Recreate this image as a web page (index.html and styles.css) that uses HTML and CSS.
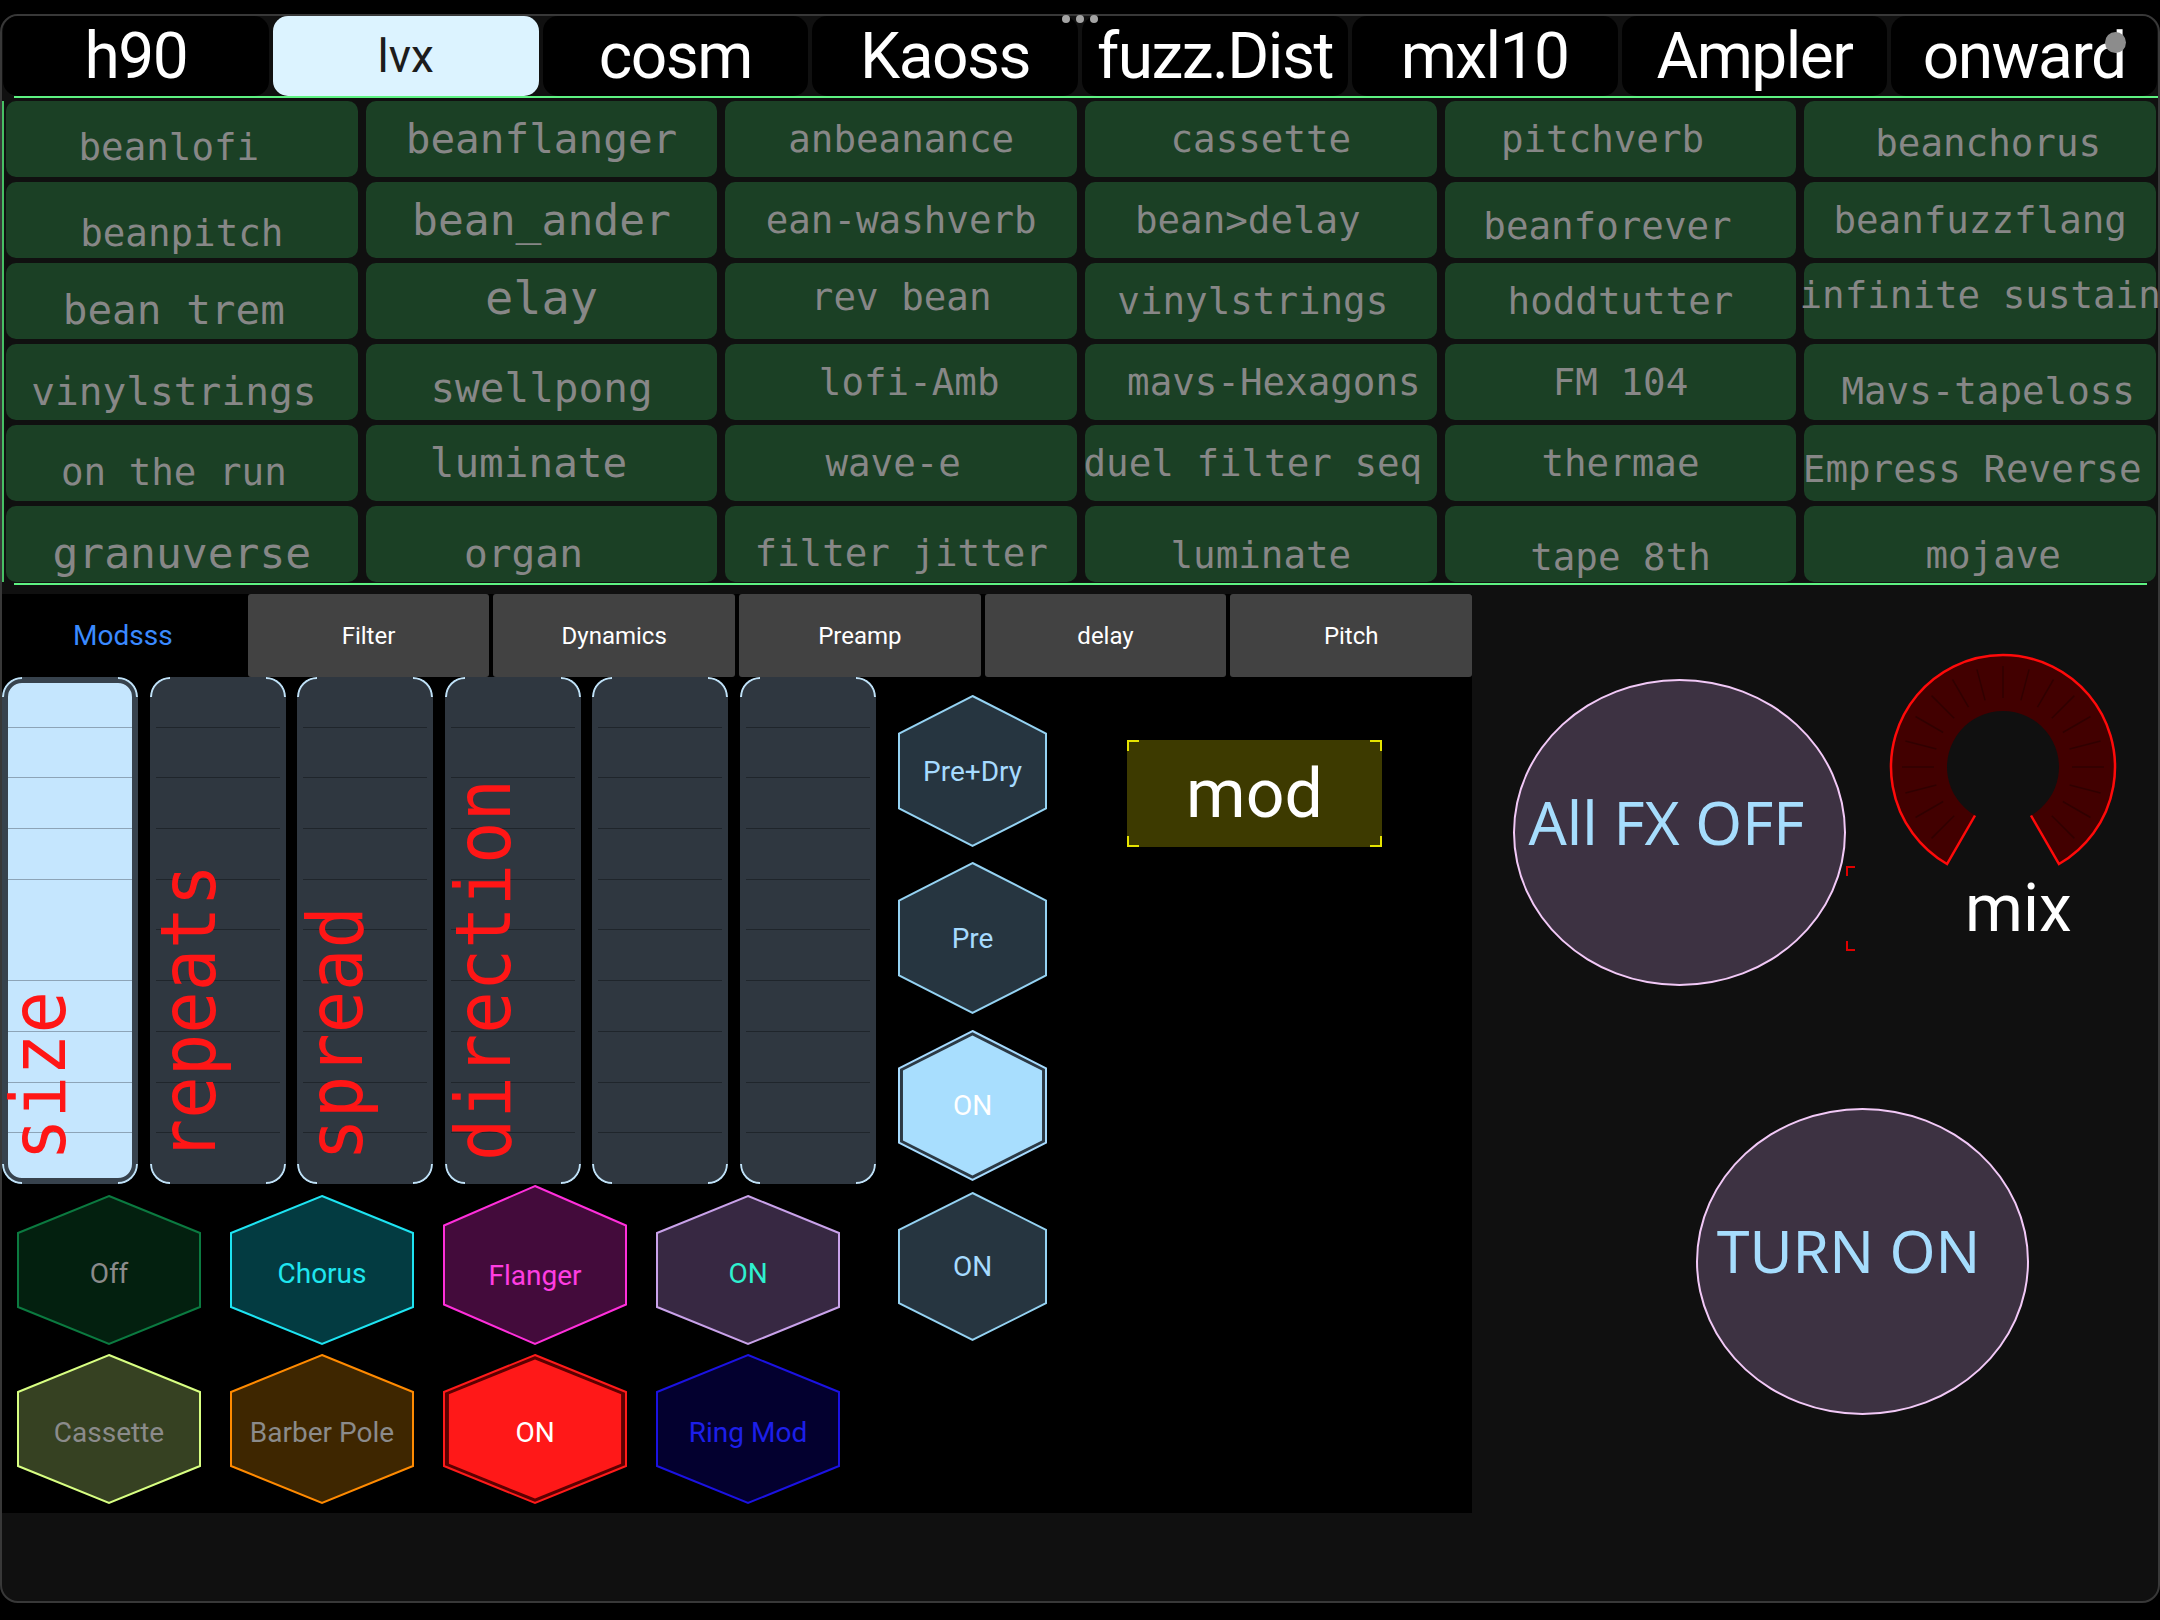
FILE: index.html
```html
<!DOCTYPE html>
<html lang="en">
<head>
<meta charset="utf-8">
<title>FX Control</title>
<link rel="stylesheet" href="styles.css">
</head>
<body>
<div class="dots"><i></i><i></i><i></i></div>
<div class="rec"></div>
<div class="frame">
  <nav class="tabs">
    <div class="tab">h90</div>
    <div class="tab active">lvx</div>
    <div class="tab">cosm</div>
    <div class="tab">Kaoss</div>
    <div class="tab">fuzz.Dist</div>
    <div class="tab">mxl10</div>
    <div class="tab">Ampler</div>
    <div class="tab">onward</div>
  </nav>
  <div class="gline"></div>
  <div class="presets">
    <div class="cell d8 l13"><span>beanlofi</span></div>
    <div class="cell fl"><span>beanflanger</span></div>
    <div class="cell"><span>anbeanance</span></div>
    <div class="cell"><span>cassette</span></div>
    <div class="cell l18"><span>pitchverb</span></div>
    <div class="cell d4 r8"><span>beanchorus</span></div>

    <div class="cell d13"><span>beanpitch</span></div>
    <div class="cell fxl"><span>bean_ander</span></div>
    <div class="cell"><span>ean-washverb</span></div>
    <div class="cell l13"><span>bean&gt;delay</span></div>
    <div class="cell d6 l13"><span>beanforever</span></div>
    <div class="cell"><span>beanfuzzflang</span></div>

    <div class="cell fl d9 l8"><span>bean trem</span></div>
    <div class="cell fxxl u4"><span>elay</span></div>
    <div class="cell u4"><span>rev bean</span></div>
    <div class="cell l8"><span>vinylstrings</span></div>
    <div class="cell"><span>hoddtutter</span></div>
    <div class="cell u6"><span>infinite sustain</span></div>

    <div class="cell fm d9 l8"><span>vinylstrings</span></div>
    <div class="cell fl d6"><span>swellpong</span></div>
    <div class="cell r8"><span>lofi-Amb</span></div>
    <div class="cell r13"><span>mavs-Hexagons</span></div>
    <div class="cell"><span>FM 104</span></div>
    <div class="cell d9 r8"><span>Mavs-tapeloss</span></div>

    <div class="cell d9 l8"><span>on the run</span></div>
    <div class="cell fl l13"><span>luminate</span></div>
    <div class="cell l8"><span>wave-e</span></div>
    <div class="cell l8"><span>duel filter seq</span></div>
    <div class="cell"><span>thermae</span></div>
    <div class="cell d6 l8"><span>Empress Reverse</span></div>

    <div class="cell fxl d9"><span>granuverse</span></div>
    <div class="cell fm d9 l18"><span>organ</span></div>
    <div class="cell d9"><span>filter jitter</span></div>
    <div class="cell d11"><span>luminate</span></div>
    <div class="cell d13"><span>tape 8th</span></div>
    <div class="cell d11 r13"><span>mojave</span></div>
  </div>
  <div class="gline gline2"></div>

  <div class="lower">
    <section class="left">
      <div class="subtabs">
        <div class="subtab active">Modsss</div>
        <div class="subtab">Filter</div>
        <div class="subtab">Dynamics</div>
        <div class="subtab">Preamp</div>
        <div class="subtab">delay</div>
        <div class="subtab">Pitch</div>
      </div>
      <div class="work">
        <div class="leftcol">
          <div class="sliders">
            <div class="slider sel"><span class="slabel">size</span></div>
            <div class="slider"><span class="slabel">repeats</span></div>
            <div class="slider"><span class="slabel">spread</span></div>
            <div class="slider"><span class="slabel">direction</span></div>
            <div class="slider"></div>
            <div class="slider"></div>
          </div>
          <div class="hexrow r1">
            <div class="hex h-off"><svg viewBox="0 0 100 100" preserveAspectRatio="none"><polygon points="50,0 100,25 100,75 50,100 0,75 0,25"/></svg><span>Off</span></div>
            <div class="hex h-chorus"><svg viewBox="0 0 100 100" preserveAspectRatio="none"><polygon points="50,0 100,25 100,75 50,100 0,75 0,25"/></svg><span>Chorus</span></div>
            <div class="hex h-flanger tall"><svg viewBox="0 0 100 100" preserveAspectRatio="none"><polygon points="50,0 100,25 100,75 50,100 0,75 0,25"/></svg><span>Flanger</span></div>
            <div class="hex h-purple"><svg viewBox="0 0 100 100" preserveAspectRatio="none"><polygon points="50,0 100,25 100,75 50,100 0,75 0,25"/></svg><span>ON</span></div>
          </div>
          <div class="hexrow r2">
            <div class="hex h-cass"><svg viewBox="0 0 100 100" preserveAspectRatio="none"><polygon points="50,0 100,25 100,75 50,100 0,75 0,25"/></svg><span>Cassette</span></div>
            <div class="hex h-barber"><svg viewBox="0 0 100 100" preserveAspectRatio="none"><polygon points="50,0 100,25 100,75 50,100 0,75 0,25"/></svg><span>Barber Pole</span></div>
            <div class="hex h-red"><svg viewBox="0 0 100 100" preserveAspectRatio="none"><polygon class="o" points="50,0 100,25 100,75 50,100 0,75 0,25"/><polygon class="i" points="50,3 97.3,26.5 97.3,73.5 50,97 2.7,73.5 2.7,26.5"/></svg><span>ON</span></div>
            <div class="hex h-ring"><svg viewBox="0 0 100 100" preserveAspectRatio="none"><polygon points="50,0 100,25 100,75 50,100 0,75 0,25"/></svg><span>Ring Mod</span></div>
          </div>
        </div>
        <div class="hexcol">
          <div class="hex h-blue"><svg viewBox="0 0 100 100" preserveAspectRatio="none"><polygon points="50,0 100,25 100,75 50,100 0,75 0,25"/></svg><span>Pre+Dry</span></div>
          <div class="hex h-blue"><svg viewBox="0 0 100 100" preserveAspectRatio="none"><polygon points="50,0 100,25 100,75 50,100 0,75 0,25"/></svg><span>Pre</span></div>
          <div class="hex h-lit"><svg viewBox="0 0 100 100" preserveAspectRatio="none"><polygon class="o" points="50,0 100,25 100,75 50,100 0,75 0,25"/><polygon class="i" points="50,3 97.3,26.5 97.3,73.5 50,97 2.7,73.5 2.7,26.5"/></svg><span>ON</span></div>
          <div class="hex h-blue last"><svg viewBox="0 0 100 100" preserveAspectRatio="none"><polygon points="50,0 100,25 100,75 50,100 0,75 0,25"/></svg><span>ON</span></div>
        </div>
        <div class="modbox">mod</div>
      </div>
    </section>

    <section class="right">
      <div class="rowA">
        <div class="pill fxoff"><span>All FX OFF</span></div>
        <div class="knobcol">
          <svg class="knob" viewBox="0 0 228 212">
            <path class="ring" d="M58 210 A112 112 0 1 1 170 210 L142 161.5 A56 56 0 1 0 86 161.5 Z"/>
            <g class="ticks">
              <line x1="65.2" y1="161.8" x2="42.6" y2="184.4"/>
              <line x1="54.2" y1="147.5" x2="26.5" y2="163.5"/>
              <line x1="47.4" y1="130.9" x2="16.4" y2="139.1"/>
              <line x1="45" y1="113" x2="13" y2="113"/>
              <line x1="47.4" y1="95.1" x2="16.4" y2="86.9"/>
              <line x1="54.2" y1="78.5" x2="26.5" y2="62.5"/>
              <line x1="65.2" y1="64.2" x2="42.6" y2="41.6"/>
              <line x1="79.5" y1="53.2" x2="63.5" y2="25.5"/>
              <line x1="96.1" y1="46.4" x2="87.9" y2="15.4"/>
              <line x1="114" y1="44" x2="114" y2="12"/>
              <line x1="131.9" y1="46.4" x2="140.1" y2="15.4"/>
              <line x1="148.5" y1="53.2" x2="164.5" y2="25.5"/>
              <line x1="162.8" y1="64.2" x2="185.4" y2="41.6"/>
              <line x1="173.8" y1="78.5" x2="201.5" y2="62.5"/>
              <line x1="180.6" y1="95.1" x2="211.6" y2="86.9"/>
              <line x1="183" y1="113" x2="215" y2="113"/>
              <line x1="180.6" y1="130.9" x2="211.6" y2="139.1"/>
              <line x1="173.8" y1="147.5" x2="201.5" y2="163.5"/>
              <line x1="162.8" y1="161.8" x2="185.4" y2="184.4"/>
            </g>
            <path class="edge" d="M86 161.5 L58 210 A112 112 0 1 1 170 210 L142 161.5"/>
          </svg>
          <div class="mixlabel">mix</div>
        </div>
      </div>
      <div class="pill turnon"><span>TURN ON</span></div>
    </section>
  </div>
</div>
</body>
</html>
```

FILE: styles.css
```css
* { box-sizing: border-box; }

html, body {
  margin: 0;
  padding: 0;
  width: 2160px;
  height: 1620px;
  overflow: hidden;
  background: #000;
}

body {
  position: relative;
  font-family: Roboto, "Noto Sans", sans-serif;
}

/* system overlays */
.dots {
  position: absolute;
  top: 15px;
  left: 1062px;
  display: flex;
  gap: 6px;
  z-index: 5;
}
.dots i {
  display: block;
  width: 8px;
  height: 8px;
  border-radius: 50%;
  background: #a4a4a4;
}
.rec {
  position: absolute;
  left: 2105px;
  top: 32px;
  width: 21px;
  height: 21px;
  border-radius: 50%;
  background: #8c8c8c;
  z-index: 5;
}

/* frame */
.frame {
  margin-top: 14px;
  width: 2160px;
  height: 1589px;
  border: 2px solid #383838;
  border-radius: 18px;
  background: #101010;
  display: flex;
  flex-direction: column;
}

/* top tabs */
.tabs {
  height: 80px;
  flex-shrink: 0;
  display: flex;
  gap: 4px;
  padding: 0 1px;
}
.tab {
  flex: 1;
  background: #000;
  border-radius: 15px;
  color: #fff;
  font-size: 64px;
  letter-spacing: -1.5px;
  display: flex;
  align-items: center;
  justify-content: center;
  white-space: nowrap;
}
.tab.active {
  background: #dcf3ff;
  color: #1c1c1c;
  font-size: 46px;
  letter-spacing: 0;
}

.gline {
  height: 2px;
  flex-shrink: 0;
  background: #5ef282;
  margin-left: 12px;
}
.gline2 {
  margin: 1px 11px 0 12px;
}

/* preset grid */
.presets {
  margin-top: 3px;
  height: 481px;
  flex-shrink: 0;
  display: grid;
  grid-template-columns: repeat(6, 1fr);
  grid-template-rows: repeat(6, 76px);
  gap: 5px 8px;
  padding: 0 2px 0 4px;
  box-shadow: inset 2px 0 #47c064;
}
.cell {
  background: #1b4025;
  border-radius: 10px;
  display: flex;
  align-items: center;
  justify-content: center;
  font-family: "DejaVu Sans Mono", "Liberation Mono", monospace;
  font-size: 37.5px;
  color: #878787;
  white-space: nowrap;
  min-width: 0;
}
.cell span { flex-shrink: 0; }
.cell.fm { font-size: 39.5px; }
.cell.fl { font-size: 41px; }
.cell.fxl { font-size: 43px; }
.cell.fxxl { font-size: 47px; }
.cell.d4 { padding-top: 8px; }
.cell.d6 { padding-top: 12px; }
.cell.d8 { padding-top: 16px; }
.cell.d9 { padding-top: 18px; }
.cell.d11 { padding-top: 22px; }
.cell.d13 { padding-top: 26px; }
.cell.u4 { padding-bottom: 8px; }
.cell.u6 { padding-bottom: 12px; }
.cell.l8 { padding-right: 16px; }
.cell.l13 { padding-right: 26px; }
.cell.l18 { padding-right: 36px; }
.cell.r8 { padding-left: 16px; }
.cell.r13 { padding-left: 26px; }

/* lower area */
.lower {
  margin-top: 9px;
  height: 919px;
  flex-shrink: 0;
  display: flex;
}
.left {
  width: 1470px;
  flex-shrink: 0;
  background: #000;
  display: flex;
  flex-direction: column;
}
.subtabs {
  height: 83px;
  flex-shrink: 0;
  display: flex;
  gap: 4px;
}
.subtab {
  flex: 1;
  background: #424242;
  border-radius: 3px;
  color: #fff;
  font-size: 24px;
  display: flex;
  align-items: center;
  justify-content: center;
}
.subtab.active {
  background: #000;
  color: #3a8aff;
  font-size: 28px;
}

.work {
  display: flex;
  align-items: flex-start;
}
.leftcol {
  width: 873px;
  flex-shrink: 0;
}

/* sliders */
.sliders {
  display: flex;
  gap: 11.5px;
  height: 507px;
}
.slider {
  position: relative;
  width: 136px;
  flex-shrink: 0;
  background: #2f3740;
  border-radius: 20px;
  display: flex;
  align-items: flex-end;
}
.slider::after {
  content: "";
  position: absolute;
  top: 0;
  left: 6px;
  right: 6px;
  bottom: 10px;
  background: repeating-linear-gradient(to bottom, transparent 0 49.7px, #1f252b 49.7px 50.7px);
}
.slider::before {
  content: "";
  position: absolute;
  inset: 0;
  border: 2px solid #bfe1f7;
  border-radius: 20px;
  z-index: 2;
  -webkit-mask:
    linear-gradient(#000 0 0) left top / 20px 20px no-repeat,
    linear-gradient(#000 0 0) right top / 20px 20px no-repeat,
    linear-gradient(#000 0 0) left bottom / 20px 20px no-repeat,
    linear-gradient(#000 0 0) right bottom / 20px 20px no-repeat;
  mask:
    linear-gradient(#000 0 0) left top / 20px 20px no-repeat,
    linear-gradient(#000 0 0) right top / 20px 20px no-repeat,
    linear-gradient(#000 0 0) left bottom / 20px 20px no-repeat,
    linear-gradient(#000 0 0) right bottom / 20px 20px no-repeat;
}
.slider.sel {
  background: #c5e6fe;
  border: 6px solid #37424d;
}
.slider.sel::before { inset: -6px; }
.slider.sel::after {
  top: -6px;
  left: 0;
  right: 0;
  background: repeating-linear-gradient(to bottom, transparent 0 49.7px, #8da4b7 49.7px 50.7px);
}
.slabel {
  position: relative;
  z-index: 1;
  writing-mode: vertical-rl;
  text-orientation: sideways;
  transform: rotate(180deg) scaleX(1.08);
  font-family: "DejaVu Sans Mono", "Liberation Mono", monospace;
  font-size: 70.5px;
  line-height: 70px;
  color: #ff1616;
  white-space: nowrap;
  margin: 0 0 23px 4px;
}
.slider.sel .slabel { margin: 0 0 17px -4px; }

/* hexagon buttons */
.hex {
  position: relative;
  flex-shrink: 0;
  display: flex;
  align-items: center;
  justify-content: center;
  font-size: 28px;
  white-space: nowrap;
}
.hex svg {
  position: absolute;
  inset: 0;
  width: 100%;
  height: 100%;
  overflow: visible;
}
.hex polygon {
  vector-effect: non-scaling-stroke;
  stroke-width: 2;
}
.hex span { position: relative; z-index: 1; }

.hexrow {
  display: flex;
  gap: 31px;
  padding-left: 16px;
  align-items: flex-end;
}
.hexrow.r1 { margin-top: 2px; height: 158px; }
.hexrow.r2 { margin-top: 11px; }
.hexrow .hex { width: 182px; height: 148px; padding-top: 6px; }
.hexrow .hex.tall { height: 158px; padding-top: 20px; }

.h-off polygon { fill: #03200f; stroke: #0b7a40; }
.h-off span { color: #8b8b8b; }
.h-chorus polygon { fill: #033b41; stroke: #1ee4f2; }
.h-chorus span { color: #1fe6ef; }
.h-flanger polygon { fill: #430b3b; stroke: #ff2fdb; }
.h-flanger span { color: #ff3de2; }
.h-purple polygon { fill: #372842; stroke: #c9a2ea; }
.h-purple span { color: #2ff0cf; }
.h-cass polygon { fill: #364122; stroke: #d8ff82; }
.h-cass span { color: #8b8b8b; }
.h-barber polygon { fill: #3e2600; stroke: #ff8a00; }
.h-barber span { color: #8b8b8b; }
.h-red polygon.o { fill: #5c0000; stroke: #ff1a1a; }
.h-red polygon.i { fill: #ff1818; stroke: none; }
.h-red span { color: #fff; }
.h-ring polygon { fill: #03002f; stroke: #1b12e2; }
.h-ring span { color: #1d1fe9; }

.hexcol {
  margin-left: 24px;
  padding-top: 19px;
  display: flex;
  flex-direction: column;
  gap: 17px;
}
.hexcol .hex { width: 147px; height: 150px; }
.hexcol .hex.h-lit { height: 149px; margin-top: 1px; }
.hexcol .hex.last { height: 147px; margin-top: -4px; }
.h-blue polygon { fill: #263540; stroke: #95d3f3; }
.h-blue span { color: #a6dbff; }
.h-lit polygon.o { fill: #2c3944; stroke: #a6dbff; }
.h-lit polygon.i { fill: #a8defe; stroke: none; }
.h-lit span { color: #fff; }

/* mod label */
.modbox {
  margin-left: 81px;
  margin-top: 63px;
  width: 255px;
  height: 107px;
  flex-shrink: 0;
  display: flex;
  align-items: center;
  justify-content: center;
  color: #fff;
  font-size: 68px;
  background:
    linear-gradient(#e6e400, #e6e400) left top / 12px 2px no-repeat,
    linear-gradient(#e6e400, #e6e400) left top / 2px 11px no-repeat,
    linear-gradient(#e6e400, #e6e400) right top / 12px 2px no-repeat,
    linear-gradient(#e6e400, #e6e400) right top / 2px 11px no-repeat,
    linear-gradient(#e6e400, #e6e400) left bottom / 12px 2px no-repeat,
    linear-gradient(#e6e400, #e6e400) left bottom / 2px 11px no-repeat,
    linear-gradient(#e6e400, #e6e400) right bottom / 12px 2px no-repeat,
    linear-gradient(#e6e400, #e6e400) right bottom / 2px 11px no-repeat,
    #3d3a00;
}

/* right area */
.right {
  flex: 1;
  min-width: 0;
  display: flex;
  flex-direction: column;
}
.rowA {
  display: flex;
  align-items: flex-start;
}
.pill {
  width: 333px;
  height: 307px;
  flex-shrink: 0;
  border-radius: 50%;
  border: 2px solid #f2c9f7;
  background: #3d3242;
  display: flex;
  align-items: center;
  justify-content: center;
  color: #a6ddfd;
  font-family: "Noto Sans", "Open Sans", sans-serif;
  font-size: 60px;
  white-space: nowrap;
}
.fxoff {
  margin-left: 41px;
  margin-top: 85px;
  padding: 0 26px 22px 0;
}
.turnon {
  margin-left: 224px;
  margin-top: 122px;
  padding: 0 28px 24px 0;
  font-size: 59px;
}

.knobcol {
  margin-top: 60px;
  width: 314px;
  flex-shrink: 0;
}
.knob {
  display: block;
  margin-left: 43px;
  width: 228px;
  height: 212px;
  overflow: visible;
}
.knob .ring { fill: #420000; }
.knob .ticks line { stroke: #300000; stroke-width: 1.5; }
.knob .edge { fill: none; stroke: #ff0a0a; stroke-width: 2.5; }

.mixlabel {
  height: 85px;
  padding-left: 119px;
  display: flex;
  align-items: center;
  color: #fff;
  font-size: 66px;
  background:
    linear-gradient(#e00000, #e00000) left top / 9px 2px no-repeat,
    linear-gradient(#e00000, #e00000) left top / 2px 10px no-repeat,
    linear-gradient(#e00000, #e00000) left bottom / 9px 2px no-repeat,
    linear-gradient(#e00000, #e00000) left bottom / 2px 10px no-repeat;
}
```
